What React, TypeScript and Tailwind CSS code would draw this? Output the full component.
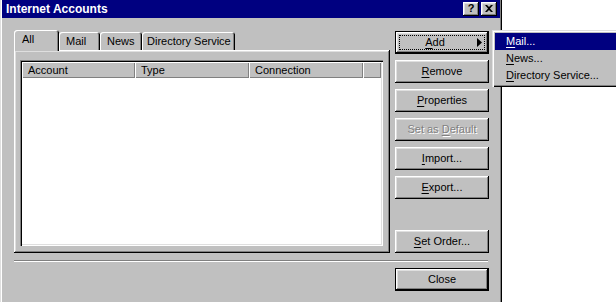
import React from "react";

const raised =
  "shadow-[inset_-1px_-1px_0_#000,inset_1px_1px_0_#fff,inset_-2px_-2px_0_#808080,inset_2px_2px_0_#dfdfdf]";
const sunken =
  "shadow-[inset_1px_1px_0_#808080,inset_2px_2px_0_#000,inset_-1px_-1px_0_#fff,inset_-2px_-2px_0_#dfdfdf]";

function U({ children }: { children: React.ReactNode }) {
  return <span className="underline underline-offset-[2px]">{children}</span>;
}

function Btn({
  children,
  disabled,
  isDefault,
  className = "",
}: {
  children: React.ReactNode;
  disabled?: boolean;
  isDefault?: boolean;
  className?: string;
}) {
  return (
    <div
      className={`h-[23px] w-[94px] bg-[#c0c0c0] flex items-center justify-center ${
        isDefault ? "border border-black" : ""
      } ${className}`}
    >
      <div className={`w-full h-full flex items-center justify-center ${raised}`}>
        <span
          className={
            disabled ? "text-[#808080] [text-shadow:1px_1px_0_#fff]" : "text-black"
          }
        >
          {children}
        </span>
      </div>
    </div>
  );
}

function Tab({ label, active, w }: { label: string; active?: boolean; w: string }) {
  return (
    <div
      className={`${w} ${
        active ? "h-[21px] relative z-10 -mb-[1px] bg-[#c0c0c0]" : "h-[18px]"
      } rounded-t-[3px] flex items-center shadow-[inset_1px_1px_0_#fff,inset_-1px_0_0_#000,inset_-2px_0_0_#808080]`}
    >
      <span className={active ? "-mt-[2px]" : ""}>{label}</span>
    </div>
  );
}

function HeaderCell({ label, w }: { label: string; w: string }) {
  return (
    <div
      className={`${w} h-[16px] flex items-center pl-[6px] bg-[#c0c0c0] shadow-[inset_1px_1px_0_#fff,inset_-1px_-1px_0_#808080]`}
    >
      {label}
    </div>
  );
}

export default function App() {
  return (
    <div className="relative w-[616px] h-[302px] overflow-hidden bg-white font-['Liberation_Sans',Arial,sans-serif] text-[11px] text-black leading-none">
      {/* 창 */}
      <div className="w-[502px] h-[310px] bg-[#c0c0c0] shadow-[inset_1px_0_0_#dfdfdf,inset_2px_0_0_#fff,inset_-1px_0_0_#000,inset_-2px_0_0_#808080]">
        {/* 제목 표시줄 */}
        <div className="mx-[2px] h-[18px] bg-[#000080] flex items-center pl-[4px] pr-[3px]">
          <span className="text-white font-bold text-[12px]">Internet Accounts</span>
          <div className="ml-auto flex gap-[2px]">
            <div className={`w-[16px] h-[14px] bg-[#c0c0c0] flex items-center justify-center ${raised}`}>
              <span className="font-bold text-[11px] -mt-[1px]">?</span>
            </div>
            <div className={`w-[16px] h-[14px] bg-[#c0c0c0] flex items-center justify-center ${raised}`}>
              <svg width="8" height="7" viewBox="0 0 8 7" className="-mt-[1px]">
                <path d="M0 0h2l2 2 2-2h2L5 3.5 8 7H6L4 5 2 7H0l3-3.5z" fill="#000" />
              </svg>
            </div>
          </div>
        </div>

        {/* 본문 */}
        <div className="pl-[14px] pt-[12px] flex gap-[5px]">
          <div className="w-[376px] flex flex-col">
            <div className="flex items-end h-[20px]">
              <Tab label="All" active w="w-[45px] pl-[8px]" />
              <Tab label="Mail" w="w-[41px] pl-[7px]" />
              <Tab label="News" w="w-[42px] pl-[7px]" />
              <Tab label="Directory Service" w="w-[93px] pl-[5px]" />
            </div>
            <div className={`h-[203px] pl-[6px] pt-[10px] ${raised}`}>
              <div className={`w-[363px] h-[186px] bg-white p-[2px] ${sunken}`}>
                <div className="flex">
                  <HeaderCell label="Account" w="w-[113px]" />
                  <HeaderCell label="Type" w="w-[114px]" />
                  <HeaderCell label="Connection" w="w-[114px]" />
                  <HeaderCell label="" w="flex-1" />
                </div>
              </div>
            </div>
          </div>

          <div className="w-[94px] flex flex-col gap-[6px] pt-[1px]">
            <div className="h-[23px] w-[94px] border border-black bg-[#c0c0c0]">
              <div className={`w-full h-full flex items-center p-[3px] ${raised}`}>
                <div className="w-full h-full border border-dotted border-black flex items-center">
                  <span className="w-[70px] text-center">
                    <U>A</U>dd
                  </span>
                  <svg width="5" height="9" viewBox="0 0 5 9" className="ml-[7px]">
                    <path d="M0 0l5 4.5L0 9z" fill="#000" />
                  </svg>
                </div>
              </div>
            </div>
            <Btn>
              <U>R</U>emove
            </Btn>
            <Btn>
              <U>P</U>roperties
            </Btn>
            <Btn disabled>
              Set as <U>D</U>efault
            </Btn>
            <Btn>
              <U>I</U>mport...
            </Btn>
            <Btn>
              <U>E</U>xport...
            </Btn>
            <Btn className="mt-auto">
              <U>S</U>et Order...
            </Btn>
          </div>
        </div>

        <div className="ml-[14px] mt-[7px] w-[474px] h-[2px] border-t border-[#808080] border-b border-b-white" />

        <div className="mt-[6px] pl-[395px]">
          <Btn isDefault>Close</Btn>
        </div>
      </div>

      {/* 추가 메뉴 */}
      <div className="absolute left-[492px] top-[30px] w-[140px] bg-[#c0c0c0] py-[3px] pl-[3px] shadow-[inset_1px_1px_0_#dfdfdf,inset_2px_2px_0_#fff,inset_-1px_-1px_0_#000,inset_-2px_-2px_0_#808080]">
        <div className="h-[17px] bg-[#000080] text-white flex items-center pl-[11px]">
          <U>M</U>ail...
        </div>
        <div className="h-[17px] flex items-center pl-[11px]">
          <U>N</U>ews...
        </div>
        <div className="h-[17px] flex items-center pl-[11px]">
          <U>D</U>irectory Service...
        </div>
      </div>
    </div>
  );
}
